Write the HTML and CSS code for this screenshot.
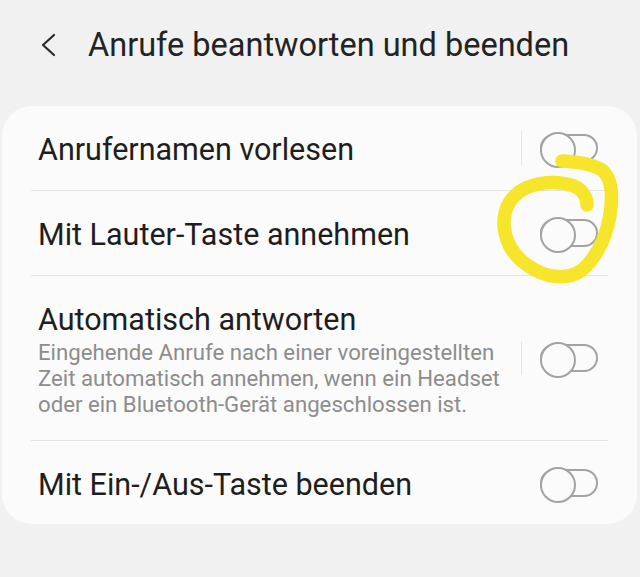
FILE: index.html
```html
<!DOCTYPE html>
<html lang="de">
<head>
<meta charset="utf-8">
<title>Anrufe beantworten und beenden</title>
<link rel="stylesheet" href="styles.css">
</head>
<body>
<div class="screen">
  <header class="appbar">
    <svg class="back" width="20" height="26" viewBox="0 0 20 26" aria-hidden="true">
      <polyline points="15,3 4,13 15,23" fill="none" stroke="#2a2a2a" stroke-width="2.2" stroke-linecap="round" stroke-linejoin="round"/>
    </svg>
    <h1 class="title">Anrufe beantworten und beenden</h1>
  </header>

  <section class="card">
    <div class="row row-sep">
      <div class="text"><div class="label">Anrufernamen vorlesen</div></div>
      <div class="vline"></div>
      <div class="toggle"></div>
    </div>
    <div class="row row-plain">
      <div class="text"><div class="label">Mit Lauter-Taste annehmen</div></div>
      <div class="toggle"></div>
    </div>
    <div class="row row-sep row-tall">
      <div class="text">
        <div class="label">Automatisch antworten</div>
        <div class="sub">Eingehende Anrufe nach einer voreingestellten<br>Zeit automatisch annehmen, wenn ein Headset<br>oder ein Bluetooth-Gerät angeschlossen ist.</div>
      </div>
      <div class="vline"></div>
      <div class="toggle"></div>
    </div>
    <div class="row row-plain">
      <div class="text"><div class="label">Mit Ein-/Aus-Taste beenden</div></div>
      <div class="toggle"></div>
    </div>
  </section>

  <svg class="scribble" width="640" height="577" viewBox="0 0 640 577" aria-hidden="true">
    <path d="M562 161 C575 162 590 163 602 170 C612 178 613 195 610 215 C606 238 598 256 582 270 C570 279 552 279 535 270 C518 261 506 247 504 226 C503 207 512 194 528 187 C545 181 562 182 574 186 C583 190 587 198 587 205" fill="none" stroke="#f7e52b" stroke-width="13.5" stroke-linecap="round" stroke-linejoin="round"/>
  </svg>
</div>
</body>
</html>
```
FILE: styles.css
```css
* { box-sizing: border-box; }
html, body {
  margin: 0;
  padding: 0;
  background: #f1f1f1;
}
body {
  font-family: Roboto, "Noto Sans", "Liberation Sans", sans-serif;
  width: 640px;
  height: 577px;
  overflow: hidden;
}
.screen {
  position: relative;
  width: 640px;
  height: 577px;
}
.appbar {
  display: flex;
  align-items: center;
  height: 106px;
  padding-left: 39px;
  padding-bottom: 16px;
}
.back {
  display: block;
  flex: none;
}
.title {
  margin: 0 0 0 29px;
  font-size: 32.5px;
  font-weight: 400;
  color: #232323;
  white-space: nowrap;
}
.card {
  margin: 0 3px 0 2px;
  background: #fbfbfb;
  border-radius: 30px;
  padding: 0 29px;
}
.row {
  display: flex;
  align-items: center;
  height: 85px;
  padding: 0 10px 0 7px;
  border-bottom: 1px solid #e4e4e4;
}
.row:last-child { border-bottom: none; height: 83px; }
.row-tall { height: 165px; }
.text {
  flex: 1;
  min-width: 0;
  padding-top: 4px;
}
.row-tall .text { padding-top: 2px; }
.label {
  font-size: 30.5px;
  line-height: 38px;
  color: #1e1e1e;
  white-space: nowrap;
}
.sub {
  margin-top: 0;
  font-size: 22.2px;
  line-height: 26px;
  color: #8d8d8d;
  white-space: nowrap;
}
.vline {
  flex: none;
  width: 1px;
  height: 34px;
  background: #e6e6e6;
  margin-right: 18px;
}
.toggle {
  flex: none;
  position: relative;
  width: 58px;
  height: 28px;
  border: 2px solid #a3a3a3;
  border-radius: 14px;
}
.toggle::before {
  content: "";
  position: absolute;
  left: -2px;
  top: -4px;
  width: 32px;
  height: 32px;
  border: 2px solid #a3a3a3;
  border-radius: 50%;
  background: #fbfbfb;
}
.scribble {
  position: absolute;
  left: 0;
  top: 0;
  pointer-events: none;
}
```
